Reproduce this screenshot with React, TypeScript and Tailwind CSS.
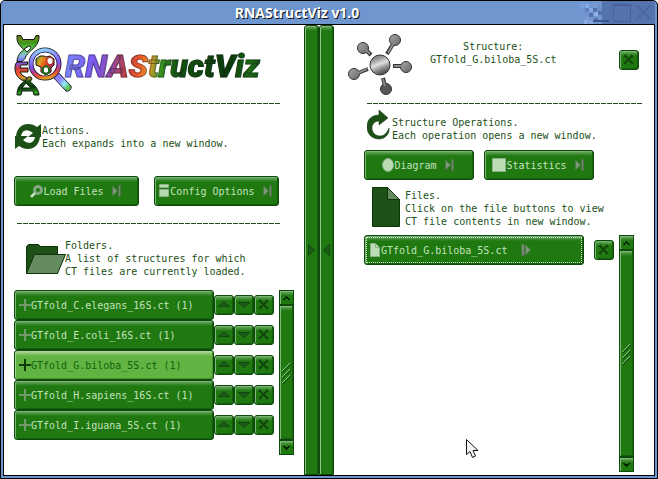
import React from "react";
import { clsx } from "clsx";

const bevel =
  "rounded-[3px] border border-[#0b4a0b] bg-[#1f7810] bg-[linear-gradient(180deg,#8fc088_0px,#63a45a_1px,#3f8d33_3px,#1f7810_5px)] shadow-[inset_1px_0_0_#7fb878,inset_-1px_-1px_0_#175f0d]";
const bevelLight =
  "rounded-[3px] border border-[#0b4a0b] bg-[#61b441] bg-[linear-gradient(180deg,#b5dba6_0px,#93cb7d_2px,#61b441_5px)] shadow-[inset_1px_0_0_#a5d494,inset_-1px_-1px_0_#4c9632]";

const folders = [
  { name: "GTfold_C.elegans_16S.ct (1)", selected: false },
  { name: "GTfold_E.coli_16S.ct (1)", selected: false },
  { name: "GTfold_G.biloba_5S.ct (1)", selected: true },
  { name: "GTfold_H.sapiens_16S.ct (1)", selected: false },
  { name: "GTfold_I.iguana_5S.ct (1)", selected: false },
];

function Rule() {
  return (
    <hr className="h-px shrink-0 border-0 bg-[repeating-linear-gradient(90deg,#1c5016_0px,#1c5016_5px,transparent_5px,transparent_6px)]" />
  );
}

function Cross() {
  return (
    <svg width="12" height="12" viewBox="0 0 12 12" shapeRendering="crispEdges" aria-hidden="true">
      <path
        d="M1 1h2v1h1v1h1v1h1V3h1V2h1V1h2v2H9v1H8v1H7v1h1v1h1v1h1v2H8V9H7V8H6V7H5v1H4v1H3v1H1V8h1V7h1V6h1V5H3V4H2V3H1z"
        fill="#11460d"
      />
      <path d="M0 2h1v1H0zM10 2h1v1h-1zM0 8h1v1H0zM10 8h1v1h-1zM2 0h1v1H2zM8 0h1v1H8zM2 10h1v1H2zM8 10h1v1H8z" fill="#175a11" />
    </svg>
  );
}

function Triangle({ down = false }: { down?: boolean }) {
  return (
    <svg width="12" height="12" viewBox="0 0 12 12" aria-hidden="true">
      <path d={down ? "M.5 3.500h11L6 8.500z" : "M.5 7.500h11L6 2.500z"} fill="#1c5c16" stroke="#124510" />
    </svg>
  );
}

function SmallButton({ label, children }: { label: string; children: React.ReactNode }) {
  return (
    <button aria-label={label} className={clsx(bevel, "flex size-5 shrink-0 items-center justify-center pr-px pb-px")}>
      {children}
    </button>
  );
}

function Next() {
  return (
    <svg width="9" height="12" viewBox="0 0 9 12" aria-hidden="true">
      <path d="M.5 1v10L5.500 6z" fill="#7d9a78" stroke="#4f7a49" />
      <path d="M6.500.5h2v11h-2z" fill="#6f916a" stroke="#4f6f49" />
    </svg>
  );
}

function ActionButton({ icon, label, className }: { icon: React.ReactNode; label: string; className?: string }) {
  return (
    <button className={clsx(bevel, "flex h-[30px] items-center justify-center pr-[2px] text-[#c3e3bd]", className)}>
      {icon}
      <span className="mr-2 whitespace-nowrap">{label}</span>
      <Next />
    </button>
  );
}

function Scroller({ label }: { label: string }) {
  const end =
    "flex h-[15px] w-full shrink-0 items-center justify-center border border-[#0b4a0b] bg-[#1f7810] bg-[linear-gradient(180deg,#8fc088_0px,#4b953f_2px,#1f7810_5px)] shadow-[inset_1px_0_0_#7fb878]";
  return (
    <div role="group" aria-label={label} className="flex w-[15px] shrink-0 flex-col self-stretch bg-[#0b4a0b]">
      <button aria-label="Scroll up" className={end}>
        <svg width="7" height="4" viewBox="0 0 7 4" shapeRendering="crispEdges" aria-hidden="true">
          <path d="M3 0h1v1h1v1h1v1h1v1H5V3H4V2H3v1H2v1H0V3h1V2h1V1h1z" fill="#021c02" />
        </svg>
      </button>
      <div className="flex w-full flex-1 items-center justify-center border border-[#0b4a0b] bg-[#1f7810] bg-[linear-gradient(180deg,#8fc088_0px,#4b953f_2px,#1f7810_5px)] shadow-[inset_1px_0_0_#7fb878,inset_-1px_-1px_0_#175f0d]">
        <svg width="9" height="22" viewBox="0 0 9 22" fill="none" aria-hidden="true">
          <path d="M0 9l8-8M0 15l8-8M0 21l8-8" stroke="#8fc088" />
          <path d="M1 10l8-8M1 16l8-8M1 22l8-8" stroke="#0b4a0b" />
        </svg>
      </div>
      <button aria-label="Scroll down" className={end}>
        <svg width="7" height="4" viewBox="0 0 7 4" shapeRendering="crispEdges" aria-hidden="true">
          <path d="M0 0h2v1h3V0h2v1H6v1H5v1H4v1H3V3H2V2H1V1H0z" fill="#021c02" />
        </svg>
      </button>
    </div>
  );
}

function Splitter({ label, left = false }: { label: string; left?: boolean }) {
  return (
    <button
      aria-label={label}
      className="flex w-[15px] items-center justify-center rounded-t-[3px] border border-[#0b4a0b] bg-[#1f7810] bg-[linear-gradient(180deg,#8fc088_0px,#4b953f_2px,#1f7810_5px)] shadow-[inset_1px_0_0_#8fc088,inset_-1px_0_0_#175f0d]"
    >
      <svg width="7" height="12" viewBox="0 0 7 12" aria-hidden="true">
        <path d={left ? "M6.500.5v11L.5 6z" : "M.5.5v11l6-5.500z"} fill="#1c5c16" stroke="#0f4a0c" />
      </svg>
    </button>
  );
}

function LogoMark() {
  return (
    <svg width="59" height="61" viewBox="0 0 59 61" className="shrink-0" aria-hidden="true">
      <defs>
        <linearGradient id="dna" gradientUnits="userSpaceOnUse" x1="10" y1="0" x2="14" y2="61">
          <stop offset="0" stopColor="#7a7010" />
          <stop offset=".14" stopColor="#3f9a20" />
          <stop offset=".24" stopColor="#5fd04c" />
          <stop offset=".34" stopColor="#8fb8f0" />
          <stop offset=".44" stopColor="#7556ee" />
          <stop offset=".54" stopColor="#d03a40" />
          <stop offset=".64" stopColor="#f05a28" />
          <stop offset=".7" stopColor="#d89a30" />
          <stop offset=".76" stopColor="#135010" />
          <stop offset=".87" stopColor="#0c3a0a" />
          <stop offset=".95" stopColor="#37a024" />
          <stop offset="1" stopColor="#155a10" />
        </linearGradient>
        <linearGradient id="lens" x1=".3" y1="0" x2=".5" y2="1">
          <stop offset="0" stopColor="#8fd0ff" />
          <stop offset=".25" stopColor="#8a90ff" />
          <stop offset=".55" stopColor="#7a52ee" />
          <stop offset=".78" stopColor="#c84070" />
          <stop offset=".92" stopColor="#f05a28" />
          <stop offset="1" stopColor="#d99a25" />
        </linearGradient>
        <linearGradient id="handle" x1="0" y1="0" x2="1" y2="1">
          <stop offset="0" stopColor="#745cf5" />
          <stop offset=".45" stopColor="#8f8cff" />
          <stop offset=".65" stopColor="#8fe8f8" />
          <stop offset=".85" stopColor="#55c04c" />
          <stop offset="1" stopColor="#b8cf50" />
        </linearGradient>
        <linearGradient id="cell" x1="0" y1="0" x2="1" y2=".6">
          <stop offset="0" stopColor="#34a020" />
          <stop offset=".3" stopColor="#e0a020" />
          <stop offset=".6" stopColor="#e84020" />
          <stop offset="1" stopColor="#a02080" />
        </linearGradient>
      </defs>
      <g fill="url(#dna)" stroke="#111c10" strokeWidth="1">
        <path d="M3 .5h4l2 4h11l2-4h3v3c-1 5-3 8-7 11-3 3-6 5-7 9l-3 3H3c0-5 3-9 7-12-4-3-7-7-7-11z" />
        <path d="M10 14l5-3c2 0 2 2 1 3l-3 3z" fill="#fff" />
        <path d="M3 27h11l-1 3H7l-1 3h8v4H6l2 3c3 2 5 3 8 4l-4 3C4 44 1 39 1 34c0-3 0-5 2-7z" />
        <path d="M14 42h3l1 2-2 3c5 3 9 8 9 13h-5l-1-4H8l-1 4H3c0-7 3-11 8-14zM12 48l-4 5h9z" fillRule="evenodd" />
      </g>
      <path d="M42 35l15 16c1 3-2 6-5 5L38 41z" fill="url(#handle)" stroke="#1b1740" />
      <circle cx="31" cy="29" r="14" fill="#fff" stroke="#151225" strokeWidth="5" />
      <circle cx="31" cy="29" r="14" fill="none" stroke="url(#lens)" strokeWidth="3.500" />
      <path d="M22 24l4-3h4l2 1 4-1 4 3v6l-3 3v4l-5 3-5-3v-5l-5-2z" fill="url(#cell)" stroke="#1c1414" />
      <path d="M33 24l3-2 3 2v4l-3 2-3-2z" fill="#fff" stroke="#a32418" />
      <path d="M29 33l3-2 3 2v4l-3 2-3-2z" fill="#fff" stroke="#216b1a" strokeWidth="2" />
    </svg>
  );
}

function Molecule() {
  const nodes = [
    [47, 6],
    [15, 14],
    [6, 40],
    [58, 33],
    [38, 55],
  ];
  return (
    <svg width="64" height="62" viewBox="0 0 64 62" className="shrink-0" aria-hidden="true">
      <defs>
        <linearGradient id="metal" x1="0" y1="0" x2=".4" y2="1">
          <stop offset="0" stopColor="#686868" />
          <stop offset=".3" stopColor="#999" />
          <stop offset=".55" stopColor="#e0e0e0" />
          <stop offset=".75" stopColor="#999" />
          <stop offset="1" stopColor="#555" />
        </linearGradient>
        <linearGradient id="bulb" x1="0" y1="0" x2="1" y2="1">
          <stop offset="0" stopColor="#aaa" />
          <stop offset="1" stopColor="#666" />
        </linearGradient>
      </defs>
      <path d="M39 20l6-10M23 21l-5-5M20 35l-10 4M45 32h10M35 44l2 8" stroke="#333" strokeWidth="4" />
      {nodes.map(([x, y]) => (
        <circle key={x} cx={x} cy={y} r="5.500" fill={x === 38 ? "#555" : "url(#bulb)"} stroke="#333" />
      ))}
      <path d="M40 19l5-9M22 20l-4-4M19 35l-9 4M46 32h9M35 45l2 7" stroke="#8b8b8b" strokeWidth="2" />
      <circle cx="32" cy="31" r="11.500" fill="#fff" />
      <circle cx="32" cy="31" r="10" fill="url(#metal)" stroke="#333" />
    </svg>
  );
}

function WindowControls() {
  const squares = [
    [1, 4, "#7a9fdc"], [6, 4, "#86a8e4"], [14, 3, "#7b9cd4"], [10, 8, "#86a6e0"], [19, 6, "#6e8fca"],
    [2, 11, "#7294d2"], [15, 12, "#93b1ea"], [6, 16, "#7a9bda"], [10, 13, "#5272ad"], [19, 11, "#5272ad"],
    [5, 20, "#8caae2"], [10, 20, "#86a6e0"], [15, 18, "#5272ad"], [6, 8, "#5f80bd"], [14, 8, "#5272ad"],
  ] as const;
  return (
    <svg width="76" height="23" viewBox="0 0 76 23" shapeRendering="crispEdges" aria-hidden="true">
      <path d="M23 0h53v23H23z" fill="#5574ae" />
      {squares.map(([x, y, c]) => (
        <path key={`${x}-${y}`} d={`M${x} ${y - 1}h4v4h-4z`} fill={c} />
      ))}
      <path d="M14 20h16" stroke="#3c578c" strokeWidth="2" />
      <path d="M34.500 3.500h17v17h-17z" fill="none" stroke="#47639c" />
      <path d="M34 4h18" stroke="#47639c" strokeWidth="2" />
      <path d="M57 4l15 15M72 4L57 19" stroke="#47639c" strokeWidth="1.500" shapeRendering="auto" />
    </svg>
  );
}

export default function App() {
  return (
    <div className="flex h-screen min-h-[479px] flex-col overflow-hidden rounded-t-[5px] border border-black bg-[#6f93cb] px-[2px] pb-[2px] font-['DejaVu_Sans_Mono','Liberation_Mono',monospace] text-[10px] leading-[13px] text-[#1c5016]">
      <header className="flex h-[23px] shrink-0 items-center bg-[#7096cf]">
        <h1 className="flex-1 pl-3 text-center font-['Open_Sans','Noto_Sans',sans-serif] text-[14px] leading-5 font-bold text-white [text-shadow:1px_1px_0_#111]">
          RNAStructViz v1.0
        </h1>
        <WindowControls />
      </header>

      <main className="grid min-h-0 flex-1 grid-cols-[minmax(0,15fr)_auto_minmax(0,16fr)] border border-black bg-white">
        <section className="flex min-w-0 flex-col px-[10px] pt-[10px]">
          <div className="flex h-[61px] items-center">
            <LogoMark />
            <p className="-ml-2 bg-[linear-gradient(100deg,#7b8cff_0%,#7b5cf5_14%,#8a4fc0_22%,#c0403c_32%,#f05a28_38%,#e09a28_43%,#3a9a20_48%,#14520f_56%,#0a3a08_82%,#1c7014_92%,#0d3a0a_100%)] bg-clip-text pr-1 font-['Roboto',sans-serif] text-[32px] leading-9 font-black text-transparent italic [-webkit-text-stroke:1px_#1a1a2a77]">
              RNAStructViz
            </p>
          </div>
          <div className="mt-[7px] mr-[14px] ml-[3px]"><Rule /></div>

          <div className="mt-5 flex items-center">
            <svg width="28" height="26" viewBox="0 0 28 26" className="shrink-0" aria-hidden="true">
              <path d="M2 12C3 4 8 0 14 0c4 0 6 1 9 3l4-3v13H14l5-4c-6-5-11-3-12 3z" fill="#1c5016" />
              <path d="M26 13c-1 8-6 12-12 12-4 0-6-1-9-3l-4 3V12h13l-5 4c6 5 11 3 12-3z" fill="#1c5016" />
            </svg>
            <p>Actions.<br />Each expands into a new window.</p>
          </div>

          <div className="mt-[26px] mr-[15px] flex gap-[15px]">
            <ActionButton
              className="flex-1"
              label="Load Files"
              icon={
                <svg width="13" height="13" viewBox="0 0 13 13" aria-hidden="true">
                  <circle cx="8" cy="5" r="3.500" fill="none" stroke="#84a880" strokeWidth="3" />
                  <path d="M5 8l-4 4" stroke="#c3e3bd" strokeWidth="2.500" />
                </svg>
              }
            />
            <ActionButton
              className="flex-1"
              label="Config Options"
              icon={
                <svg width="11" height="14" viewBox="0 0 11 14" aria-hidden="true">
                  <path d="M.5.5h9v3h-9zM.5 5.500h9v7h-9z" fill="#b5d9ae" stroke="#8fae8a" />
                </svg>
              }
            />
          </div>

          <div className="mt-[17px] mr-[14px] ml-[3px]"><Rule /></div>

          <div className="mt-[15px] ml-3 flex items-center">
            <svg width="40" height="32" viewBox="0 0 40 32" className="-mr-px shrink-0" aria-hidden="true">
              <path d="M.5 30.500v-27l2-2h10l2 2h17v27z" fill="#1c5016" stroke="#0c3408" />
              <path d="M.5 30.500l8-19h31l-8 19z" fill="#668a62" stroke="#0c3408" />
            </svg>
            <p>Folders.<br />A list of structures for which<br />CT files are currently loaded.</p>
          </div>

          <div className="mt-3 flex h-[165px] shrink-0 justify-between">
            <ul className="mr-[5px] flex-1">
              {folders.map((f) => (
                <li key={f.name} className="flex h-[30px] items-center">
                  <button
                    className={clsx(
                      "flex h-[30px] min-w-0 flex-1 items-center pl-1 whitespace-nowrap",
                      f.selected ? bevelLight : bevel,
                      f.selected ? "text-[#14600e]" : "text-[#c3e3bd]",
                    )}
                  >
                    <svg width="12" height="12" viewBox="0 0 12 12" shapeRendering="crispEdges" aria-hidden="true">
                      <path d="M5 0h2v5h5v2H7v5H5V7H0V5h5z" fill={f.selected ? "#0b3d08" : "#6f9a69"} />
                    </svg>
                    {f.name}
                  </button>
                  <SmallButton label={`Move ${f.name} up`}><Triangle /></SmallButton>
                  <SmallButton label={`Move ${f.name} down`}><Triangle down /></SmallButton>
                  <SmallButton label={`Remove ${f.name}`}><Cross /></SmallButton>
                </li>
              ))}
            </ul>
            <Scroller label="Folder list scroll bar" />
          </div>
        </section>

        <div className="flex">
          <Splitter label="Expand left pane" />
          <Splitter label="Expand right pane" left />
        </div>

        <section className="flex min-w-0 flex-col pt-[9px] pr-[20px] pb-[3px] pl-[30px]">
          <div className="-mr-[5px] -ml-4 flex h-[62px] items-start">
            <Molecule />
            <p className="mt-[6px] ml-[18px] text-center">Structure:<br />GTfold_G.biloba_5S.ct</p>
            <div className="mt-4 ml-auto"><SmallButton label="Close structure"><Cross /></SmallButton></div>
          </div>
          <div className="mt-[7px] -mr-[8px] ml-[3px]"><Rule /></div>

          <div className="mt-[6px] ml-[3px] flex h-8 items-start gap-px">
            <svg width="24" height="30" viewBox="0 0 24 30" className="shrink-0" aria-hidden="true">
              <path d="M12 0l9 8-9 7v-4c-4 0-7 3-7 7s3 8 8 8c4 0 7-3 9-8 1 6-4 11-10 11C5 29 0 24 0 17 0 9 5 5 12 5z" fill="#1c5016" stroke="#0c3408" strokeWidth=".5" />
            </svg>
            <p className="mt-[6px]">Structure Operations.<br />Each operation opens a new window.</p>
          </div>

          <div className="mt-2 mr-[40px] flex gap-[10px]">
            <ActionButton
              className="flex-1"
              label="Diagram"
              icon={
                <svg width="12" height="14" viewBox="0 0 12 14" aria-hidden="true">
                  <ellipse cx="6" cy="7" rx="5.500" ry="6.500" fill="#bbdcb5" stroke="#8fae8a" />
                </svg>
              }
            />
            <ActionButton
              className="flex-1"
              label="Statistics"
              icon={
                <svg width="14" height="14" viewBox="0 0 14 14" aria-hidden="true">
                  <path d="M.5.5h13v13H.5z" fill="#bbdcb5" stroke="#8fae8a" />
                </svg>
              }
            />
          </div>

          <div className="mt-[7px] ml-2 flex h-12 items-start gap-[5px]">
            <svg width="28" height="40" viewBox="0 0 28 40" className="shrink-0" aria-hidden="true">
              <path d="M.5.5h15l12 12v27H.5z" fill="#1c5016" stroke="#0c3408" />
              <path d="M15.500.5v12h12z" fill="#668a62" stroke="#0c3408" />
            </svg>
            <p className="mt-[2px]">Files.<br />Click on the file buttons to view<br />CT file contents in new window.</p>
          </div>

          <div className="flex min-h-0 flex-1 items-start">
            <button className={clsx(bevel, "h-[30px] min-w-0 flex-1 p-px text-[#c3e3bd]")}>
              <span className="flex h-full items-center border border-dotted border-[#d8ecd4] pl-[3px] whitespace-nowrap">
                <svg width="11" height="14" viewBox="0 0 11 14" aria-hidden="true">
                  <path d="M.5.5h5l4 4v9h-9z" fill="#bbdcb5" stroke="#8fae8a" />
                  <path d="M5.500.5v4h4" fill="none" stroke="#8fae8a" />
                </svg>
                <span>GTfold_G.biloba_5S.ct</span>
                <svg width="10" height="12" viewBox="0 0 10 12" className="ml-[14px]" aria-hidden="true">
                  <path d="M.5.5h3v11h-3z" fill="#6f916a" stroke="#4f6f49" />
                  <path d="M4.500 1v10l5-5z" fill="#7d9a78" stroke="#4f7a49" />
                </svg>
              </span>
            </button>
            <div className="mt-[5px] mr-[5px] ml-[10px]"><SmallButton label="Remove file"><Cross /></SmallButton></div>
            <Scroller label="File list scroll bar" />
          </div>
        </section>
      </main>

      <svg width="14" height="21" viewBox="0 0 14 21" className="pointer-events-none absolute top-[439px] left-[466px]" aria-hidden="true">
        <path d="M.5.5v15l3.500-3 2.500 6 3-1.500-2.500-5.500h5z" fill="#f4f4f4" stroke="#111" />
      </svg>
    </div>
  );
}
